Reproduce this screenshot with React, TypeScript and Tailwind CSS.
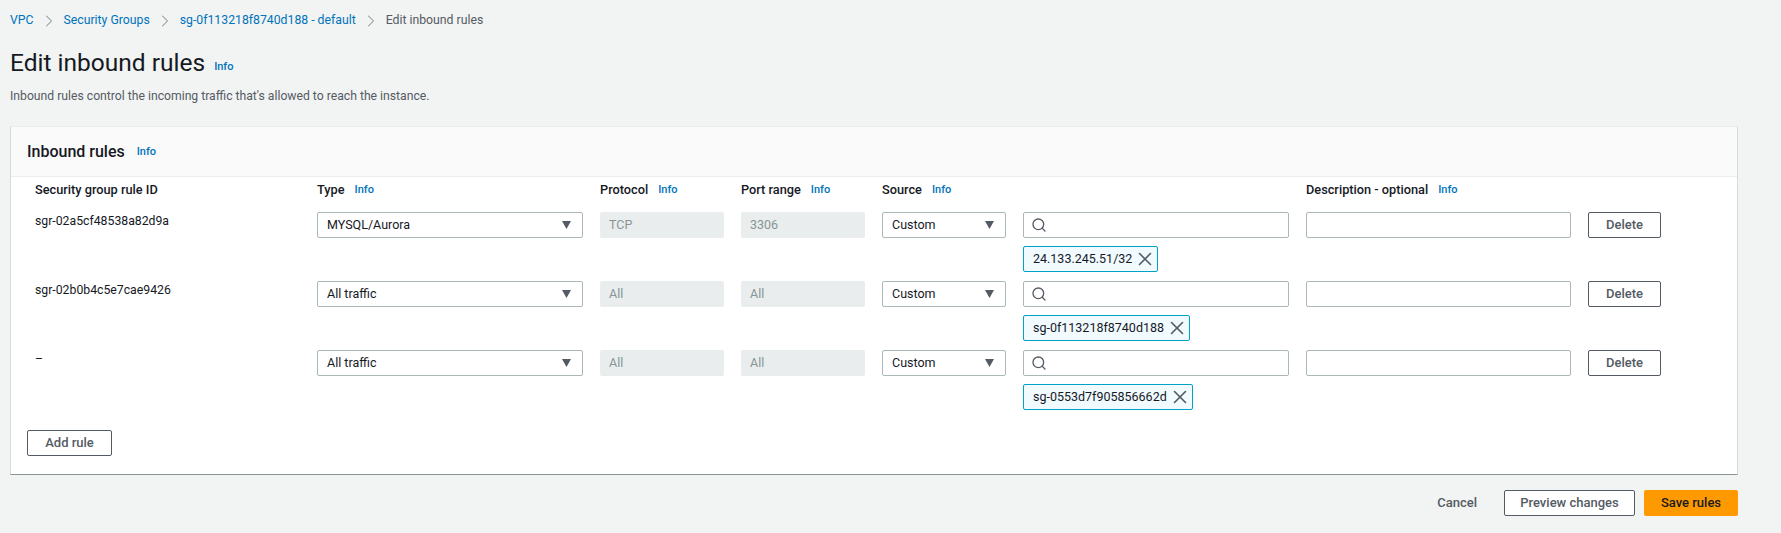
import { Search, X, ChevronRight } from "lucide-react";

type Rule = {
  id: string;
  type: string;
  protocol: string;
  port: string;
  chip: string;
  chipWidth: string;
};

const rules: Rule[] = [
  { id: "sgr-02a5cf48538a82d9a", type: "MYSQL/Aurora", protocol: "TCP", port: "3306", chip: "24.133.245.51/32", chipWidth: "w-[135px]" },
  { id: "sgr-02b0b4c5e7cae9426", type: "All traffic", protocol: "All", port: "All", chip: "sg-0f113218f8740d188", chipWidth: "w-[167px]" },
  { id: "–", type: "All traffic", protocol: "All", port: "All", chip: "sg-0553d7f905856662d", chipWidth: "w-[170px]" },
];

const GRID = "grid grid-cols-[265px_266px_124px_124px_124px_266px_265px_73px] gap-x-[17px]";

function Info({ className = "" }: { className?: string }) {
  return <span className={`text-[11px] font-medium text-[#0073bb] ${className}`}>Info</span>;
}

function Heading({ label, info = true }: { label: string; info?: boolean }) {
  return (
    <div className="flex items-center gap-[10px]">
      <span className="text-[12.75px] font-medium text-[#16191f]">{label}</span>
      {info && <Info className="mt-[2px]" />}
    </div>
  );
}

function FakeSelect({ value }: { value: string }) {
  return (
    <div className="flex h-[26px] items-center justify-between rounded-[2px] border border-[#aab7b8] bg-white pl-[9px] pr-[11px] text-[12.5px] text-[#16191f]">
      <span>{value}</span>
      <svg width="9" height="8" viewBox="0 0 9 8" aria-hidden>
        <path d="M0 0h9L4.5 8z" fill="#545b64" />
      </svg>
    </div>
  );
}

function Disabled({ value }: { value: string }) {
  return (
    <div className="flex h-[26px] items-center rounded-[2px] bg-[#eaeded] px-[9px] text-[12.5px] text-[#879596]">
      {value}
    </div>
  );
}

function Button({ label, className = "" }: { label: string; className?: string }) {
  return (
    <div
      className={`flex h-[26px] items-center justify-center rounded-[2px] border border-[#545b64] bg-white text-[13px] font-medium text-[#545b64] ${className}`}
    >
      {label}
    </div>
  );
}

function RuleRow({ rule }: { rule: Rule }) {
  return (
    <div className={`${GRID} h-[69px]`}>
      <div className="text-[12.25px] leading-[18px] text-[#16191f]">{rule.id}</div>
      <FakeSelect value={rule.type} />
      <Disabled value={rule.protocol} />
      <Disabled value={rule.port} />
      <FakeSelect value="Custom" />
      <div className="flex flex-col gap-[8px]">
        <div className="flex h-[26px] items-center rounded-[2px] border border-[#aab7b8] bg-white pl-[7px]">
          <Search size={16} color="#545b64" strokeWidth={2} />
        </div>
        <div
          className={`flex h-[26px] items-center justify-between whitespace-nowrap rounded-[2px] border border-[#00a1c9] bg-[#f1faff] pl-[9px] pr-[1px] text-[12.5px] text-[#16191f] ${rule.chipWidth}`}
        >
          <span>{rule.chip}</span>
          <X size={22} color="#545b64" strokeWidth={1.75} />
        </div>
      </div>
      <div className="h-[26px] rounded-[2px] border border-[#aab7b8] bg-white" />
      <Button label="Delete" />
    </div>
  );
}

export default function App() {
  const crumbs = ["VPC", "Security Groups", "sg-0f113218f8740d188 - default"];

  return (
    <div className="h-[533px] w-[1781px] overflow-hidden bg-[#f2f3f3] pl-[10px] pr-[43px] font-['Roboto',sans-serif]">
      {/* Breadcrumbs */}
      <nav className="flex h-[41px] items-center text-[12.25px]">
        {crumbs.map((crumb) => (
          <span key={crumb} className="flex items-center">
            <span className="text-[#0073bb]">{crumb}</span>
            <ChevronRight size={20} color="#879596" strokeWidth={1.25} className="mx-[5px]" />
          </span>
        ))}
        <span className="text-[#545b64]">Edit inbound rules</span>
      </nav>

      {/* Page title */}
      <div className="flex h-[42px] items-center gap-[9px] pt-[2px]">
        <h1 className="text-[24.5px] font-normal text-[#16191f]">Edit inbound rules</h1>
        <Info className="mt-[8px]" />
      </div>
      <p className="mt-[4px] text-[12.2px] leading-[18px] text-[#545b64]">
        Inbound rules control the incoming traffic that&apos;s allowed to reach the instance.
      </p>

      {/* Rules card */}
      <section className="mt-[21px] h-[349px] border-x border-b border-x-[#d5dbdb] border-b-[#879596] border-t border-t-[#eaeded] bg-white">
        <div className="flex h-[50px] items-center gap-[12px] border-b border-[#eaeded] bg-[#fafafa] pl-[16px]">
          <h2 className="text-[16px] font-medium text-[#16191f]">Inbound rules</h2>
          <Info className="mt-[2px]" />
        </div>

        <div className="pl-[24px]">
          <div className={`${GRID} h-[35px] items-center pb-[10px]`}>
            <Heading label="Security group rule ID" info={false} />
            <Heading label="Type" />
            <Heading label="Protocol" />
            <Heading label="Port range" />
            <Heading label="Source" />
            <div />
            <Heading label="Description - optional" />
            <div />
          </div>
          {rules.map((rule) => (
            <RuleRow key={rule.chip} rule={rule} />
          ))}
        </div>

        <div className="mt-[11px] pl-[16px]">
          <Button label="Add rule" className="w-[85px]" />
        </div>
      </section>

      {/* Footer actions */}
      <div className="mt-[15px] flex items-center justify-end">
        <span className="text-[13px] font-medium text-[#545b64]">Cancel</span>
        <Button label="Preview changes" className="ml-[27px] w-[131px]" />
        <div className="ml-[9px] flex h-[26px] w-[94px] items-center justify-center rounded-[2px] bg-[#ff9900] text-[13px] font-medium text-[#16191f]">
          Save rules
        </div>
      </div>
    </div>
  );
}
